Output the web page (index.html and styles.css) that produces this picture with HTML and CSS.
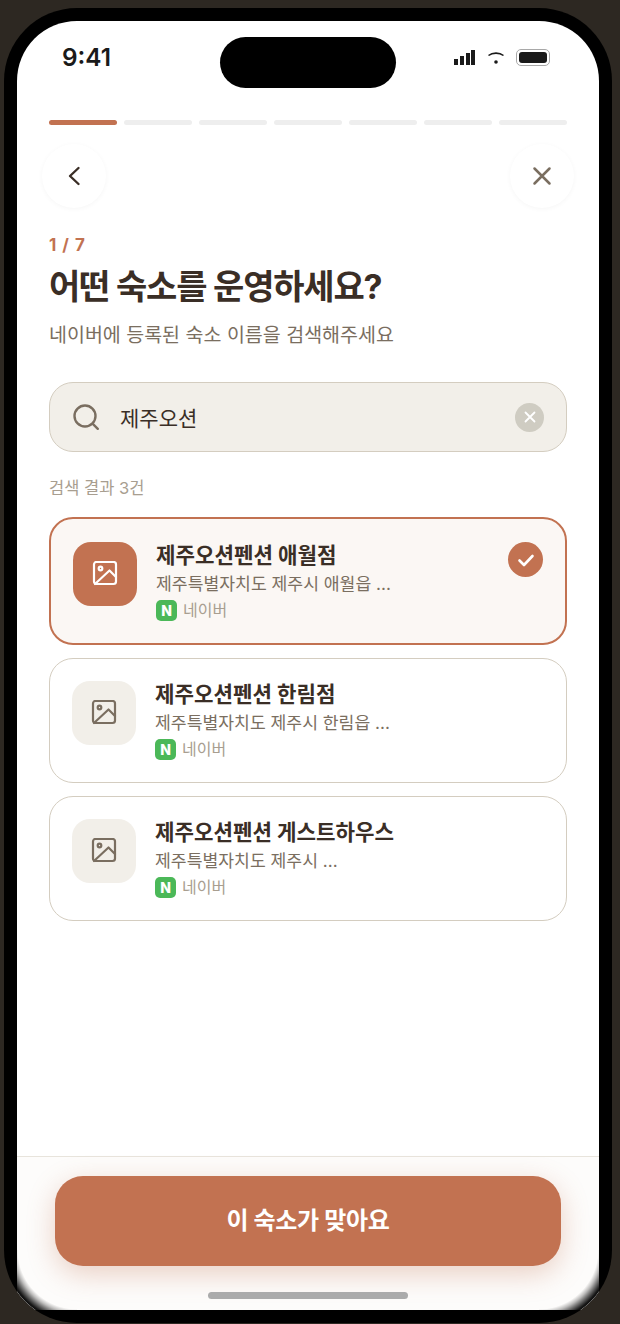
FILE: index.html
```html
<!DOCTYPE html>
<html lang="ko">
<head>
    <meta charset="UTF-8">
    <meta name="viewport" content="width=device-width, initial-scale=1.0">
    <title>숙소 검색</title>
    <link rel="stylesheet" href="styles.css">
</head>
<body>
    <div class="phone">
        <div class="screen">
            <div class="island"></div>

            <div class="status-bar">
                <span class="clock">9:41</span>
                <div class="status-icons">
                    <svg width="22" height="16" viewBox="0 0 22 16" fill="#1a1a1a">
                        <rect x="0" y="10" width="4" height="6"/>
                        <rect x="6" y="7" width="4" height="9"/>
                        <rect x="12" y="4" width="4" height="12"/>
                        <rect x="17" y="1" width="4" height="15"/>
                    </svg>
                    <svg class="wifi" width="18" height="14" viewBox="0 0 18 14" fill="none">
                        <path d="M1.500 5.500C5.500 2.300 12.500 2.300 16.500 5.500" stroke="#1a1a1a" stroke-width="1.600"/>
                        <circle cx="9" cy="12" r="1.800" fill="#1a1a1a"/>
                    </svg>
                    <div class="battery"><div class="battery-fill"></div></div>
                </div>
            </div>

            <div class="progress">
                <div class="progress-seg active"></div>
                <div class="progress-seg"></div>
                <div class="progress-seg"></div>
                <div class="progress-seg"></div>
                <div class="progress-seg"></div>
                <div class="progress-seg"></div>
                <div class="progress-seg"></div>
            </div>

            <div class="nav">
                <button class="round-btn">
                    <svg width="24" height="24" viewBox="0 0 24 24" fill="none" stroke="#3a2e26" stroke-width="2.400" stroke-linecap="round" stroke-linejoin="round"><path d="M16.500 4L8 12l8.500 8"/></svg>
                </button>
                <button class="round-btn">
                    <svg width="24" height="24" viewBox="0 0 24 24" fill="none" stroke="#7a6e60" stroke-width="2.500" stroke-linecap="round"><path d="M4.500 4.500l15 15M19.500 4.500l-15 15"/></svg>
                </button>
            </div>

            <div class="content">
                <div class="step">1 / 7</div>
                <h1 class="title">어떤 숙소를 운영하세요?</h1>
                <p class="subtitle">네이버에 등록된 숙소 이름을 검색해주세요</p>

                <div class="search">
                    <svg width="28" height="28" viewBox="0 0 28 28" fill="none" stroke="#7a6e60" stroke-width="2.400" stroke-linecap="round"><circle cx="13" cy="13" r="10.500"/><path d="M20.800 20.800l5 5"/></svg>
                    <span class="search-text">제주오션</span>
                    <span class="search-clear">
                        <svg width="12" height="12" viewBox="0 0 12 12" fill="none" stroke="#fff" stroke-width="1.800" stroke-linecap="round"><path d="M1.500 1.500l9 9M10.500 1.500l-9 9"/></svg>
                    </span>
                </div>

                <div class="result-count">검색 결과 3건</div>

                <div class="results">
                    <div class="card selected">
                        <div class="thumb">
                            <svg width="26" height="26" viewBox="0 0 26 26" fill="none" stroke="#fff" stroke-width="2.200" stroke-linecap="round" stroke-linejoin="round"><rect x="2" y="1" width="22" height="22" rx="2.500"/><circle cx="8.500" cy="7.500" r="1.800"/><path d="M24 16l-6.500-6.500L3 23"/></svg>
                        </div>
                        <div class="card-body">
                            <div class="card-name">제주오션펜션 애월점</div>
                            <div class="card-addr">제주특별자치도 제주시 애월읍 ...</div>
                            <div class="card-source"><span class="naver">N</span>네이버</div>
                        </div>
                        <span class="check">
                            <svg width="20" height="20" viewBox="0 0 20 20" fill="none" stroke="#fff" stroke-width="2.600" stroke-linecap="round" stroke-linejoin="round"><path d="M3.500 10.500l4.500 4.500 8.500-9"/></svg>
                        </span>
                    </div>

                    <div class="card">
                        <div class="thumb">
                            <svg width="26" height="26" viewBox="0 0 26 26" fill="none" stroke="#7a6e60" stroke-width="2.200" stroke-linecap="round" stroke-linejoin="round"><rect x="2" y="1" width="22" height="22" rx="2.500"/><circle cx="8.500" cy="7.500" r="1.800"/><path d="M24 16l-6.500-6.500L3 23"/></svg>
                        </div>
                        <div class="card-body">
                            <div class="card-name">제주오션펜션 한림점</div>
                            <div class="card-addr">제주특별자치도 제주시 한림읍 ...</div>
                            <div class="card-source"><span class="naver">N</span>네이버</div>
                        </div>
                    </div>

                    <div class="card">
                        <div class="thumb">
                            <svg width="26" height="26" viewBox="0 0 26 26" fill="none" stroke="#7a6e60" stroke-width="2.200" stroke-linecap="round" stroke-linejoin="round"><rect x="2" y="1" width="22" height="22" rx="2.500"/><circle cx="8.500" cy="7.500" r="1.800"/><path d="M24 16l-6.500-6.500L3 23"/></svg>
                        </div>
                        <div class="card-body">
                            <div class="card-name">제주오션펜션 게스트하우스</div>
                            <div class="card-addr">제주특별자치도 제주시 ...</div>
                            <div class="card-source"><span class="naver">N</span>네이버</div>
                        </div>
                    </div>
                </div>
            </div>

            <div class="footer">
                <button class="cta">이 숙소가 맞아요</button>
                <div class="home-bar"></div>
            </div>

            <!-- soft dark fade in the two lower corners -->
            <div class="corner-fade left"></div>
            <div class="corner-fade right"></div>
        </div>
    </div>
</body>
</html>
```

FILE: styles.css
```css
* {
    box-sizing: border-box;
}
html, body {
    height: 100%;
}
body {
    margin: 0;
    background-color: #2d2822;
    font-family: Inter, "Noto Sans CJK KR", sans-serif;
    overflow: hidden;
}
button {
    font-family: inherit;
    border: none;
    padding: 0;
}
.phone {
    width: 608px;
    height: 1315px;
    margin: 8px 0 0 4px;
    padding: 13px;
    background-color: #000;
    border-radius: 73px;
    overflow: hidden;
}
.screen {
    position: relative;
    display: flex;
    flex-direction: column;
    width: 582px;
    height: 1289px;
    background-color: #fff;
    border-radius: 60px 60px 0 0;
    overflow: hidden;
}
.island {
    position: absolute;
    top: 16px;
    left: 203px;
    width: 176px;
    height: 51px;
    background-color: #000;
    border-radius: 26px;
}
.status-bar {
    display: flex;
    justify-content: space-between;
    align-items: center;
    height: 72px;
    padding: 0 49px 0 45px;
}
.clock {
    font-size: 24.300px;
    font-weight: 600;
    color: #1a1a1a;
}
.status-icons {
    display: flex;
    align-items: center;
    gap: 11px;
}
.battery {
    width: 34px;
    height: 17px;
    padding: 2px;
    border: 1.500px solid #a8a8a8;
    border-radius: 5px;
}
.battery-fill {
    height: 100%;
    background-color: #1a1a1a;
    border-radius: 3px;
}
.progress {
    display: flex;
    gap: 7px;
    margin-top: 27px;
    padding: 0 32px;
}
.progress-seg {
    flex: 1;
    height: 5px;
    background-color: #eeeeee;
    border-radius: 3px;
}
.progress-seg.active {
    background-color: #c27251;
}
.nav {
    display: flex;
    justify-content: space-between;
    margin-top: 19px;
    padding: 0 25px;
}
.round-btn {
    display: flex;
    justify-content: center;
    align-items: center;
    width: 64px;
    height: 64px;
    background-color: #fff;
    border-radius: 50%;
    box-shadow: 0 1px 5px rgba(0, 0, 0, 0.04);
}
.content {
    flex: 1;
    padding: 0 32px;
}
.step {
    margin-top: 27px;
    font-size: 17px;
    line-height: 20px;
    font-weight: 700;
    letter-spacing: 1px;
    color: #c27251;
}
.title {
    margin: 10px 0 0;
    font-size: 34px;
    line-height: 44px;
    font-weight: 700;
    letter-spacing: -1.200px;
    color: #3a2e26;
}
.subtitle {
    margin: 12px 0 0;
    font-size: 19.500px;
    line-height: 28px;
    color: #7a6e60;
}
.search {
    display: flex;
    align-items: center;
    height: 70px;
    margin-top: 33px;
    padding: 0 22px;
    background-color: #f2efe9;
    border: 1px solid #d4cdc0;
    border-radius: 24px;
}
.search-text {
    flex: 1;
    margin-left: 20px;
    font-size: 21px;
    color: #3a2e26;
}
.search-clear {
    display: flex;
    justify-content: center;
    align-items: center;
    width: 29px;
    height: 29px;
    background-color: #cfccc2;
    border-radius: 50%;
}
.result-count {
    margin-top: 24px;
    font-size: 16.500px;
    line-height: 24px;
    color: #a89e90;
}
.results {
    display: flex;
    flex-direction: column;
    gap: 13px;
    margin-top: 17px;
}
.card {
    display: flex;
    gap: 19px;
    height: 125px;
    padding: 22px;
    background-color: #fff;
    border: 1px solid #d4cdc0;
    border-radius: 24px;
}
.card.selected {
    position: relative;
    height: 128px;
    padding: 23px 22px;
    background-color: #fbf7f4;
    border: 2px solid #c27251;
}
.thumb {
    display: flex;
    justify-content: center;
    align-items: center;
    flex-shrink: 0;
    width: 64px;
    height: 64px;
    background-color: #f2efe9;
    border-radius: 18px;
}
.selected .thumb {
    background-color: #c27251;
}
.card-name {
    font-size: 21.200px;
    line-height: 26px;
    font-weight: 700;
    color: #3a2e26;
}
.card-addr {
    margin-top: 4px;
    font-size: 17.200px;
    line-height: 24px;
    color: #7a6e60;
}
.card-source {
    display: flex;
    align-items: center;
    gap: 6px;
    margin-top: 4px;
    font-size: 16px;
    line-height: 21px;
    color: #a89e90;
}
.naver {
    display: flex;
    justify-content: center;
    align-items: center;
    width: 21px;
    height: 21px;
    background-color: #4bb858;
    border-radius: 5px;
    font-size: 14px;
    font-weight: 800;
    color: #fff;
}
.check {
    position: absolute;
    top: 23px;
    right: 22px;
    display: flex;
    justify-content: center;
    align-items: center;
    width: 35px;
    height: 35px;
    background-color: #c27251;
    border-radius: 50%;
}
.footer {
    display: flex;
    flex-direction: column;
    align-items: center;
    height: 154px;
    padding: 19px 38px 0;
    background-color: #fdfcfb;
    border-top: 1px solid #e8e4dc;
}
.cta {
    flex-shrink: 0;
    width: 100%;
    height: 90px;
    padding-bottom: 5px;
    background-color: #c27251;
    border-radius: 28px;
    box-shadow: 0 8px 28px rgba(194, 114, 81, 0.32);
    font-size: 24px;
    font-weight: 700;
    letter-spacing: -0.3px;
    color: #fff;
}
.home-bar {
    width: 200px;
    height: 7px;
    margin-top: 26px;
    background-color: #ababab;
    border-radius: 4px;
}
.corner-fade {
    position: absolute;
    bottom: 0;
    width: 60px;
    height: 60px;
    pointer-events: none;
}
.corner-fade.left {
    left: 0;
    background: radial-gradient(circle at 100% 0, rgba(0, 0, 0, 0) 59px, rgba(0, 0, 0, 0.25) 63px, rgba(0, 0, 0, 0.5) 66px, rgba(0, 0, 0, 0.9) 71px, #000 74px);
}
.corner-fade.right {
    right: 0;
    background: radial-gradient(circle at 0 0, rgba(0, 0, 0, 0) 59px, rgba(0, 0, 0, 0.25) 63px, rgba(0, 0, 0, 0.5) 66px, rgba(0, 0, 0, 0.9) 71px, #000 74px);
}
```
